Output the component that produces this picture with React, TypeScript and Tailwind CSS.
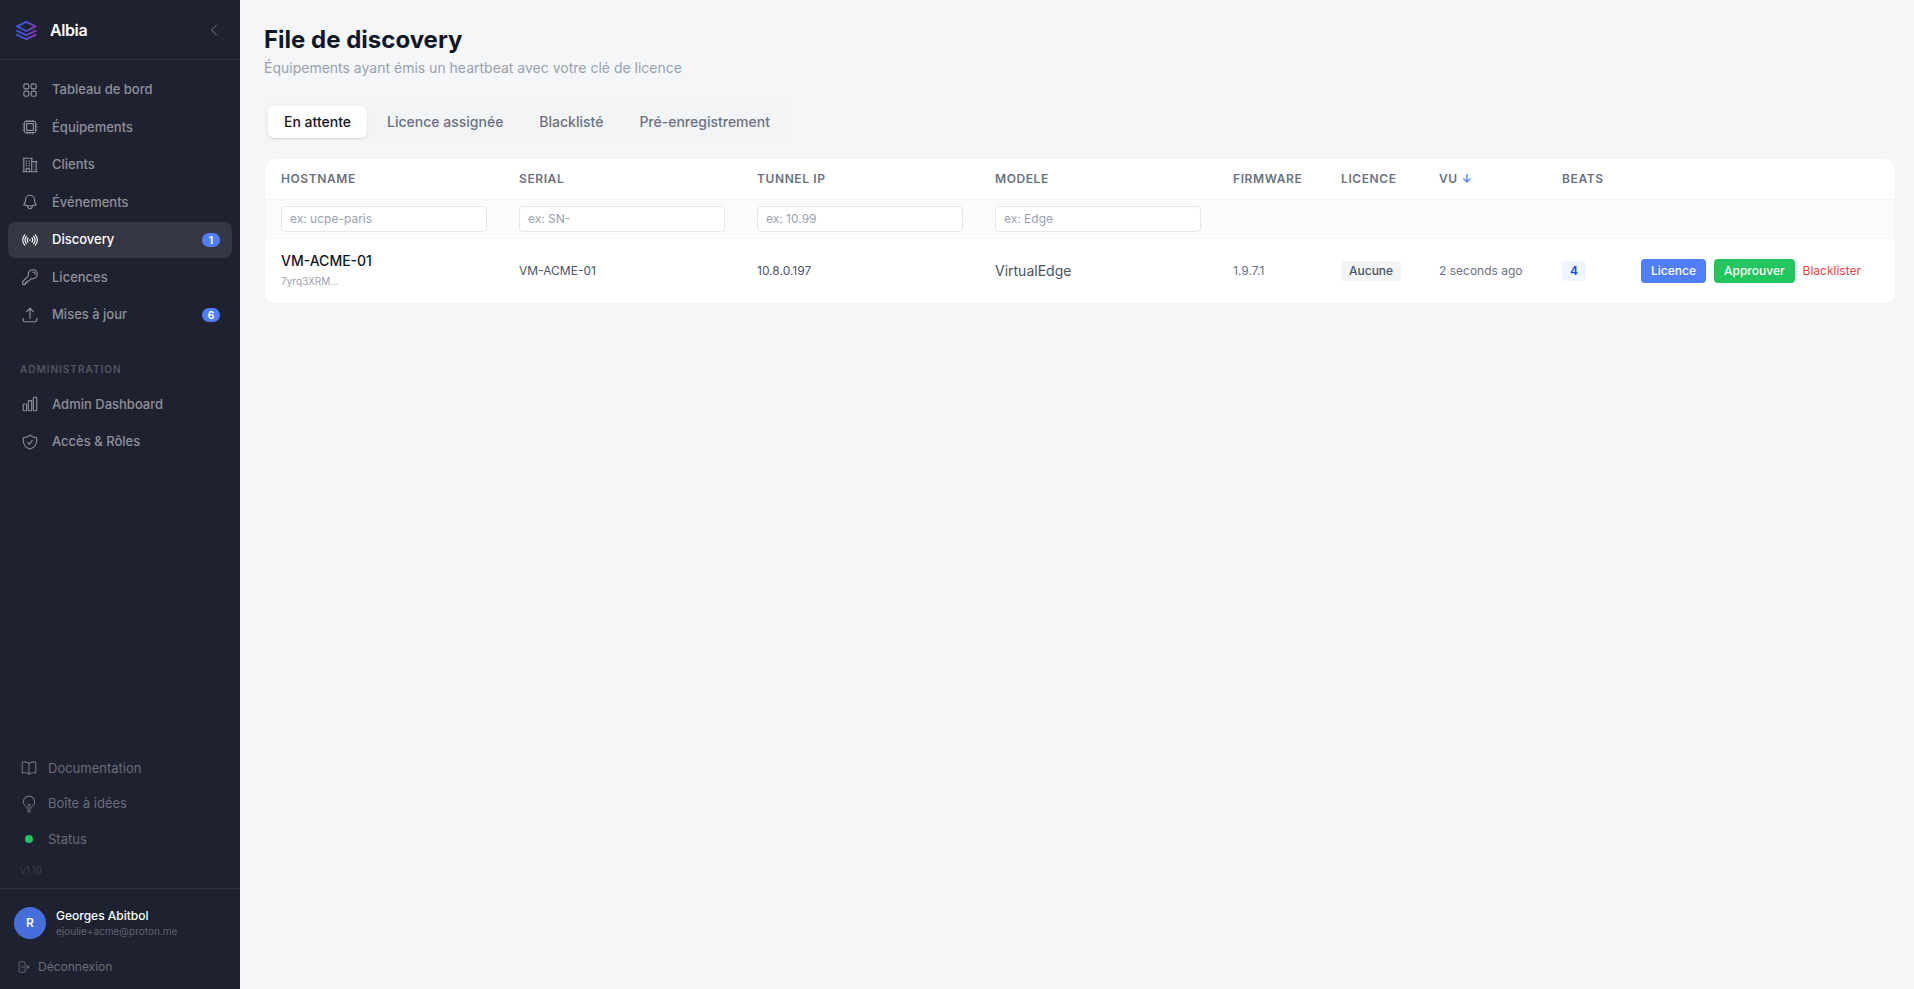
import type { ReactNode } from "react";
import type { IconType } from "react-icons";
import {
  HiOutlineArrowRightOnRectangle,
  HiOutlineArrowUpTray,
  HiOutlineBell,
  HiOutlineBookOpen,
  HiOutlineBuildingOffice2,
  HiOutlineChartBar,
  HiOutlineChevronLeft,
  HiOutlineCpuChip,
  HiOutlineKey,
  HiOutlineLightBulb,
  HiOutlineShieldCheck,
  HiOutlineSignal,
  HiOutlineSquares2X2,
} from "react-icons/hi2";

type NavItem = {
  label: string;
  icon: IconType;
  badge?: number;
  active?: boolean;
};

const mainNav: NavItem[] = [
  { label: "Tableau de bord", icon: HiOutlineSquares2X2 },
  { label: "Équipements", icon: HiOutlineCpuChip },
  { label: "Clients", icon: HiOutlineBuildingOffice2 },
  { label: "Événements", icon: HiOutlineBell },
  { label: "Discovery", icon: HiOutlineSignal, badge: 1, active: true },
  { label: "Licences", icon: HiOutlineKey },
  { label: "Mises à jour", icon: HiOutlineArrowUpTray, badge: 6 },
];

const adminNav: NavItem[] = [
  { label: "Admin Dashboard", icon: HiOutlineChartBar },
  { label: "Accès & Rôles", icon: HiOutlineShieldCheck },
];

const tabs = ["En attente", "Licence assignée", "Blacklisté", "Pré-enregistrement"];

const filters = [
  { label: "Hostname", placeholder: "ex: ucpe-paris" },
  { label: "Serial", placeholder: "ex: SN-" },
  { label: "Tunnel IP", placeholder: "ex: 10.99" },
  { label: "Modele", placeholder: "ex: Edge" },
];

function Logo() {
  return (
    <svg width="24" height="24" viewBox="0 0 24 24" fill="none" aria-hidden="true">
      <defs>
        <linearGradient id="logo" x1="2" y1="10" x2="22" y2="14" gradientUnits="userSpaceOnUse">
          <stop stopColor="#3b5bdb" />
          <stop offset="0.5" stopColor="#4d4fd8" />
          <stop offset="1" stopColor="#9333b0" />
        </linearGradient>
      </defs>
      <g stroke="url(#logo)" strokeWidth="1.9" strokeLinejoin="round" strokeLinecap="round">
        <path d="M12.3 3.8 21.6 8.4 12.3 13 3 8.4Z" />
        <path d="M3 12.9 12.3 17.2 21.6 12.9" />
        <path d="M3 16.8 12.3 21.1 21.6 16.8" />
      </g>
    </svg>
  );
}

function NavLink({ item }: { item: NavItem }) {
  const Icon = item.icon;
  return (
    <a
      href="#"
      className={`flex items-center gap-3 rounded-lg px-3 py-2 text-[13px] leading-normal font-medium ${
        item.active ? "bg-white/10 text-white" : "text-white/50"
      }`}
    >
      <span className="flex w-5 justify-center">
        <Icon className="size-[18px]" />
      </span>
      <span className="flex-1">{item.label}</span>
      {item.badge && (
        <span className="min-w-[18px] rounded-full bg-[#4f7fff] px-1 text-center text-[10px] leading-[14px] font-bold text-white">
          {item.badge}
        </span>
      )}
    </a>
  );
}

function FooterLink({ icon, children }: { icon: ReactNode; children: ReactNode }) {
  return (
    <a href="#" className="flex items-center gap-2.5 px-3 py-2 text-[13px] leading-normal text-white/35">
      <span className="flex w-[18px] justify-center">{icon}</span>
      {children}
    </a>
  );
}

function Sidebar() {
  return (
    <aside className="flex w-60 shrink-0 flex-col bg-[#1e2130]">
      <div className="flex h-[60px] items-center gap-3 border-b border-white/8 px-3.5">
        <Logo />
        <span className="flex-1 text-base font-semibold tracking-tight text-white">Albia</span>
        <button type="button" aria-label="Réduire le menu" className="p-1 text-white/40">
          <HiOutlineChevronLeft className="size-4" />
        </button>
      </div>

      <nav className="flex flex-1 flex-col gap-0.5 px-2 py-3">
        {mainNav.map((item) => (
          <NavLink key={item.label} item={item} />
        ))}
        <p className="px-3 pt-[27px] pb-2 text-[10px] leading-normal font-semibold tracking-widest text-white/25">
          ADMINISTRATION
        </p>
        {adminNav.map((item) => (
          <NavLink key={item.label} item={item} />
        ))}
      </nav>

      <div className="px-2 pb-2.5">
        <FooterLink icon={<HiOutlineBookOpen className="size-[18px]" />}>Documentation</FooterLink>
        <FooterLink icon={<HiOutlineLightBulb className="size-[18px]" />}>Boîte à idées</FooterLink>
        <FooterLink icon={<span className="size-2 rounded-full bg-[#22c55e]" />}>Status</FooterLink>
        <p className="px-3 pt-[5px] text-[10px] leading-4 text-white/15">v1.10</p>
      </div>

      <div className="border-t border-white/8 px-3.5 pt-[18px] pb-[13px]">
        <div className="flex items-center gap-2.5">
          <span className="flex size-8 items-center justify-center rounded-full bg-[#466fdb] text-xs font-semibold text-white">
            R
          </span>
          <div>
            <p className="text-xs font-medium text-white">Georges Abitbol</p>
            <p className="text-[10px] leading-[14px] text-white/30">ejoulie+acme@proton.me</p>
          </div>
        </div>
        <button type="button" className="mt-[19px] flex items-center gap-2 px-0.5 text-xs leading-normal text-white/35">
          <HiOutlineArrowRightOnRectangle className="size-3.5" />
          Déconnexion
        </button>
      </div>
    </aside>
  );
}

function DiscoveryTable() {
  return (
    <div className="mt-4 overflow-hidden rounded-xl border border-gray-100 bg-white">
      <table className="w-full table-fixed text-left">
        <colgroup>
          <col className="w-[238px]" />
          <col className="w-[238px]" />
          <col className="w-[238px]" />
          <col className="w-[238px]" />
          <col className="w-[108px]" />
          <col className="w-[98px]" />
          <col className="w-[123px]" />
          <col className="w-[79px]" />
          <col />
        </colgroup>
        <thead>
          <tr className="border-b border-gray-100 text-xs tracking-wider text-gray-500">
            <th className="px-4 py-3 font-semibold">HOSTNAME</th>
            <th className="px-4 py-3 font-semibold">SERIAL</th>
            <th className="px-4 py-3 font-semibold">TUNNEL IP</th>
            <th className="px-4 py-3 font-semibold">MODELE</th>
            <th className="px-4 py-3 font-semibold">FIRMWARE</th>
            <th className="px-4 py-3 font-semibold">LICENCE</th>
            <th className="px-4 py-3 font-semibold">
              VU <span className="text-[#4f7fff]">↓</span>
            </th>
            <th className="px-4 py-3 font-semibold">BEATS</th>
            <th aria-label="Actions" />
          </tr>
          <tr className="border-b border-gray-100 bg-[#fbfbfb]">
            {filters.map((f) => (
              <td key={f.label} className="px-4 py-1.5">
                <input
                  type="text"
                  aria-label={f.label}
                  placeholder={f.placeholder}
                  className="block w-full rounded border border-gray-200 bg-white px-2 py-1 text-xs placeholder:text-gray-400"
                />
              </td>
            ))}
            <td colSpan={5} />
          </tr>
        </thead>
        <tbody>
          <tr className="text-xs">
            <td className="px-4 pt-3 pb-3.5">
              <p className="text-sm font-medium text-gray-900">VM-ACME-01</p>
              <p className="mt-0.5 text-[10px] leading-4 text-gray-400">7yrq3XRM...</p>
            </td>
            <td className="px-4 text-gray-600">VM-ACME-01</td>
            <td className="px-4 text-gray-600">10.8.0.197</td>
            <td className="px-4 text-sm text-gray-600">VirtualEdge</td>
            <td className="px-4 text-gray-500">1.9.7.1</td>
            <td className="px-4">
              <span className="inline-block rounded bg-gray-100 px-2 py-0.5 font-medium text-gray-600">Aucune</span>
            </td>
            <td className="px-4 text-gray-500">2 seconds ago</td>
            <td className="px-4">
              <span className="inline-block rounded bg-blue-50 px-2 py-0.5 font-semibold text-blue-700">4</span>
            </td>
            <td className="px-4">
              <div className="flex items-center gap-2">
                <button type="button" className="rounded bg-[#4f7fff] px-2.5 py-1 font-medium text-white">
                  Licence
                </button>
                <button type="button" className="rounded bg-[#22c55e] px-2.5 py-1 font-medium text-white">
                  Approuver
                </button>
                <button type="button" className="text-[#ef4444]">
                  Blacklister
                </button>
              </div>
            </td>
          </tr>
        </tbody>
      </table>
    </div>
  );
}

export default function App() {
  return (
    <div className="flex min-h-screen bg-[#f4f6f8] font-[Inter,sans-serif]">
      <Sidebar />
      <main className="min-w-0 flex-1 py-6 pr-[18px] pl-6">
        <h1 className="text-2xl font-bold text-gray-900">File de discovery</h1>
        <p className="mt-0.5 text-sm text-gray-400">Équipements ayant émis un heartbeat avec votre clé de licence</p>

        <div role="tablist" className="mt-6 flex w-fit gap-1 rounded-lg bg-gray-100 p-1">
          {tabs.map((tab, i) => (
            <button
              key={tab}
              type="button"
              role="tab"
              aria-selected={i === 0}
              className={`rounded-md px-4 py-1.5 text-sm font-medium ${
                i === 0 ? "bg-white text-gray-900 shadow-sm" : "text-gray-500"
              }`}
            >
              {tab}
            </button>
          ))}
        </div>

        <DiscoveryTable />
      </main>
    </div>
  );
}
